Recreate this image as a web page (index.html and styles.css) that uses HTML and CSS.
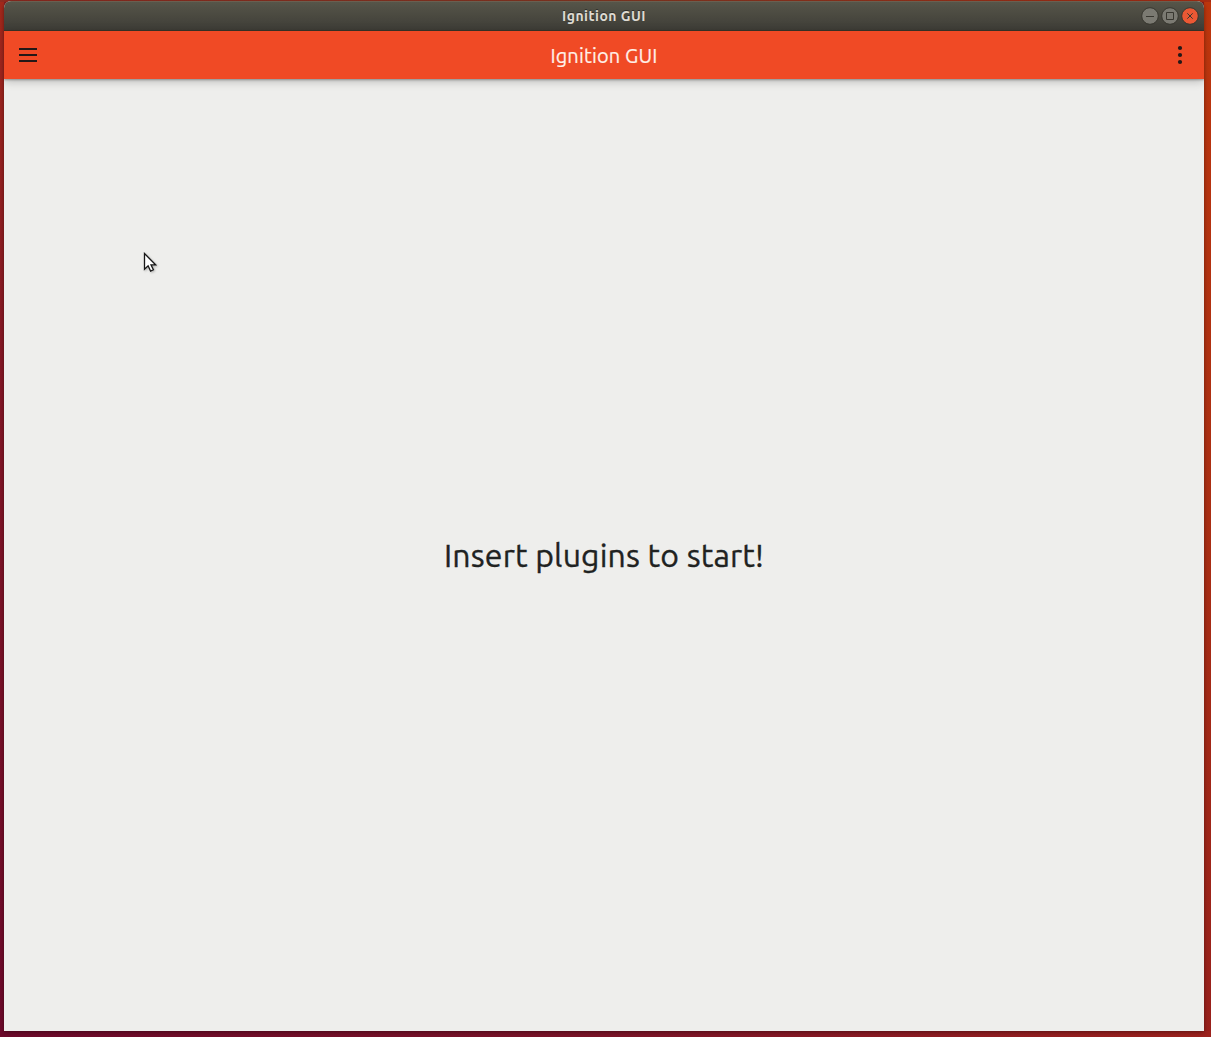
FILE: index.html
```html
<!DOCTYPE html>
<html lang="en">
<head>
<meta charset="utf-8">
<title>Ignition GUI</title>
<link rel="stylesheet" href="styles.css">
</head>
<body>
<div class="window">
  <header class="titlebar">
    <span class="window-title">Ignition GUI</span>
    <div class="controls">
      <svg class="control" viewBox="0 0 18 18"><circle cx="9" cy="9" r="8.3"/><path d="M5 9.5h8"/></svg>
      <svg class="control" viewBox="0 0 18 18"><circle cx="9" cy="9" r="8.3"/><path d="M5.5 5.5h7v7h-7z"/></svg>
      <svg class="control close" viewBox="0 0 18 18"><circle cx="9" cy="9" r="8.3"/><path d="M6.3 6.3l5.4 5.4m0-5.4l-5.4 5.4"/></svg>
    </div>
  </header>
  <nav class="toolbar">
    <svg class="icon" viewBox="0 0 24 24"><path d="M3 5h18v2H3zM3 11h18v2H3zM3 17h18v2H3z"/></svg>
    <span class="toolbar-title">Ignition GUI</span>
    <svg class="icon" viewBox="0 0 24 24"><circle cx="12" cy="5" r="2.1"/><circle cx="12" cy="12" r="2.1"/><circle cx="12" cy="19" r="2.1"/></svg>
  </nav>
  <main class="content"><p class="message">Insert plugins to start!</p></main>
</div>
<svg class="cursor" viewBox="0 0 14 21"><path d="M1.5 1.5v15.7l3.6-3.4 2.5 5.3 2.8-1.3-2.4-5h4.6z"/></svg>
</body>
</html>
```
FILE: styles.css
```css
* { box-sizing: border-box; }
body {
  margin: 0;
  height: 1037px;
  padding: 1px 7px 6px 4px;
  overflow: hidden;
  font-family: Ubuntu, "Noto Sans", sans-serif;
  background:
    linear-gradient(90deg, #8f2a20, #843722 50%, #a92c12) 0 0 / 100% 2px no-repeat,
    linear-gradient(90deg, #6d0a2b, #7b1428 50%, #9c221d) 0 100% / 100% 6px no-repeat,
    linear-gradient(#bd360d, #aa2e13 50%, #98201c) 100% 0 / 7px 100% no-repeat,
    linear-gradient(#a3281b, #851725 35%, #6d092b) 0 0 / 4px 100% no-repeat,
    #852020;
}
.window {
  height: 1030px;
  display: flex;
  flex-direction: column;
  border-radius: 7px 7px 0 0;
  overflow: hidden;
  background: #eeeeec;
  box-shadow: 0 1px 4px rgba(0, 0, 0, .4);
}
.titlebar {
  height: 30px;
  flex: none;
  display: grid;
  grid-template-columns: 1fr auto 1fr;
  align-items: center;
  padding: 0 5px;
  border-top: 1px solid #6a5f50;
  border-bottom: 1px solid #3b3529;
  background: linear-gradient(#565549, #3e3d37);
}
.window-title {
  grid-column: 2;
  color: #dfdbd2;
  font-size: 14px;
  line-height: 18px;
  padding-bottom: 1px;
  font-weight: 700;
  letter-spacing: .5px;
  text-shadow: 0 -1px #2d2c28;
}
.controls { display: flex; justify-content: flex-end; gap: 2px; }
.control { width: 18px; height: 18px; fill: #7b7a72; stroke: #383730; stroke-width: 1; }
.close { fill: #ea5834; }
.toolbar {
  height: 48px;
  flex: none;
  display: flex;
  align-items: center;
  justify-content: space-between;
  padding: 0 12px;
  background: #f04a25;
  box-shadow: 0 1px 2px rgba(0, 0, 0, .3), 0 2px 9px rgba(0, 0, 0, .24);
}
.toolbar-title {
  color: #fff0e8;
  font-size: 20px;
  line-height: 26px;
  padding-top: 1px;
  letter-spacing: .15px;
  -webkit-text-stroke: .2px #fff0e8;
}
.icon { width: 24px; height: 24px; fill: #241817; }
.content { flex: 1; display: flex; align-items: center; justify-content: center; }
.message {
  margin: 0;
  color: #202221;
  font-size: 32px;
  line-height: 44px;
  letter-spacing: .17px;
  -webkit-text-stroke: .35px #202221;
}
.cursor {
  position: absolute;
  left: 143px;
  top: 252px;
  width: 14px;
  height: 21px;
  fill: #fff;
  stroke: #171717;
  stroke-width: 1.3;
  filter: drop-shadow(1px 1px 1px rgba(0, 0, 0, .25));
}
```
